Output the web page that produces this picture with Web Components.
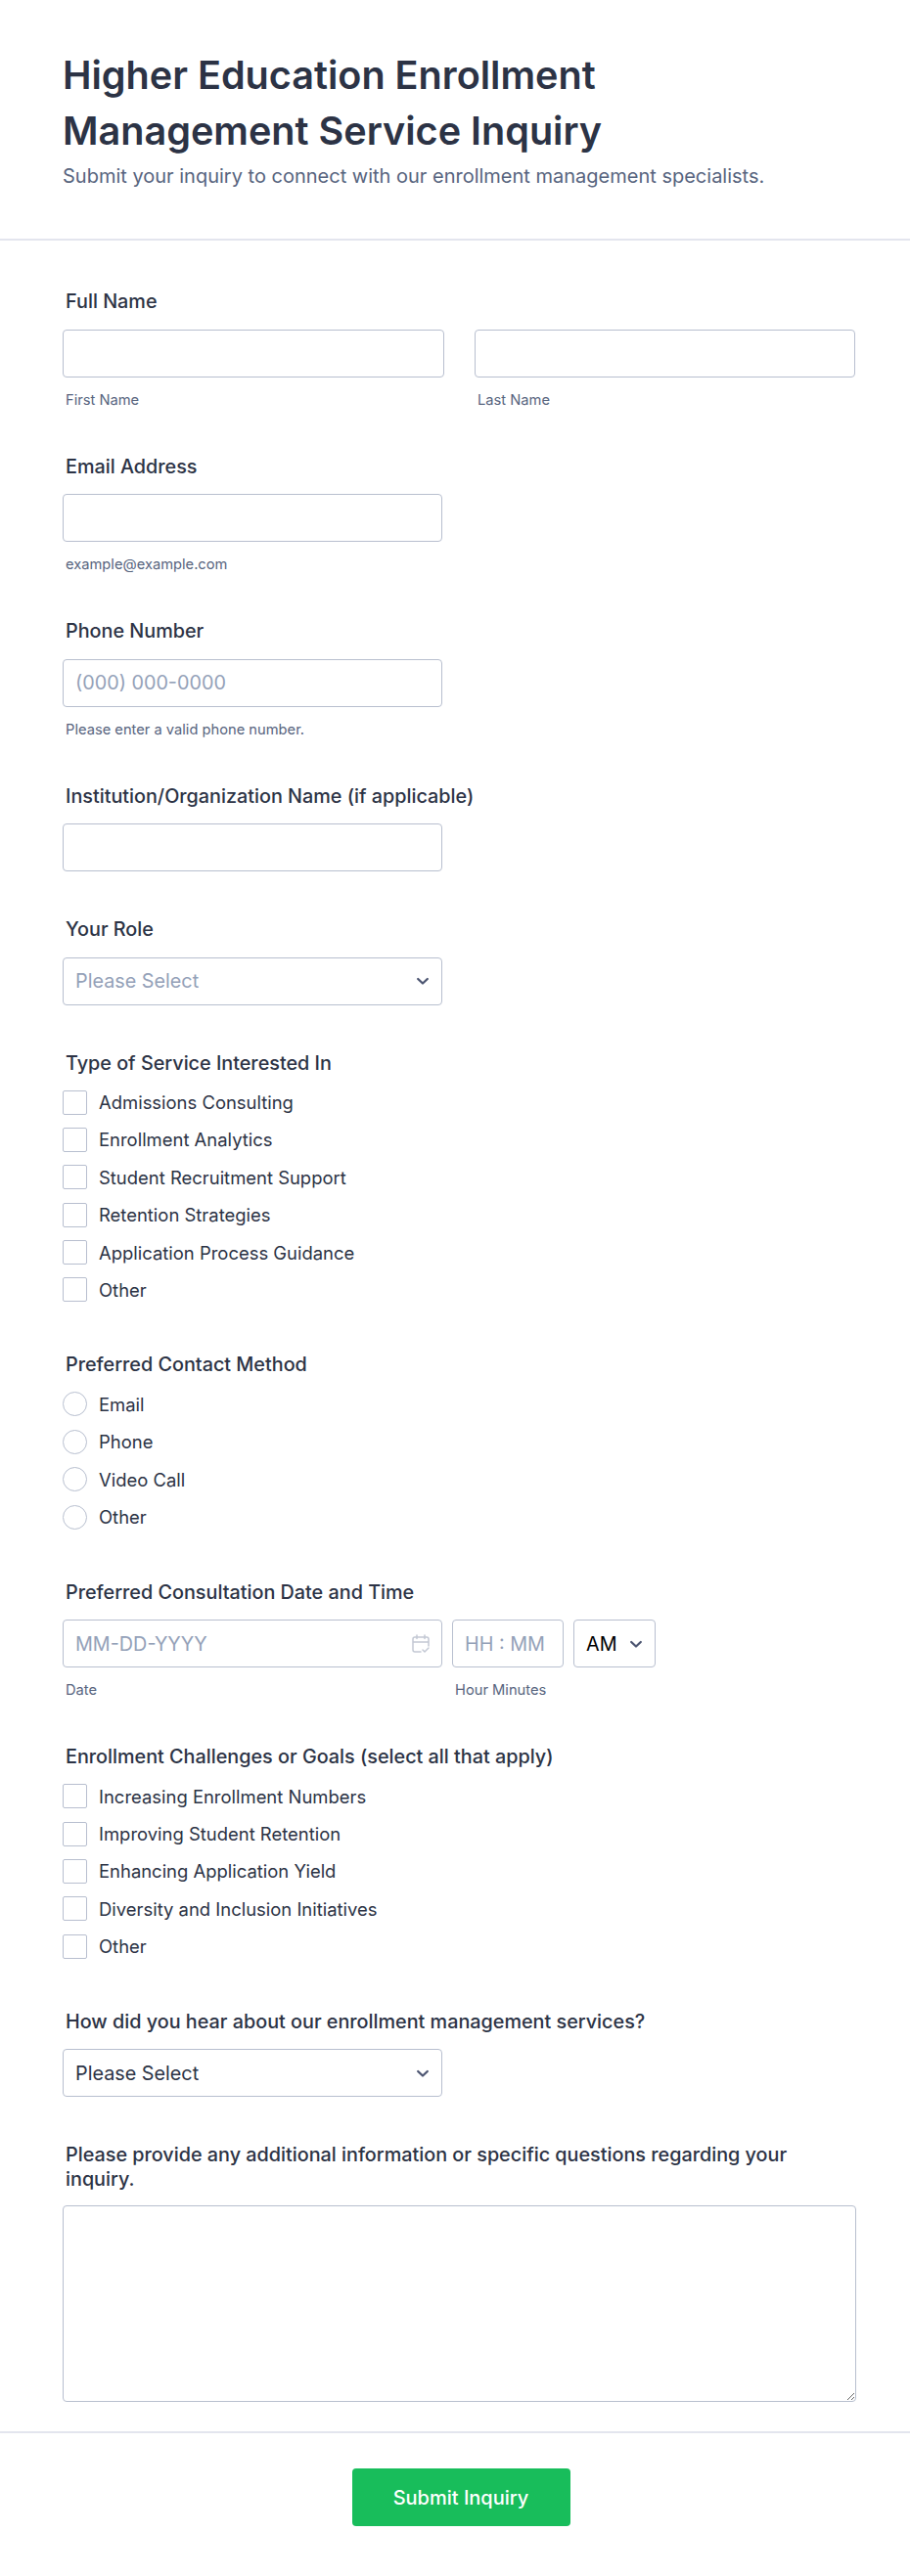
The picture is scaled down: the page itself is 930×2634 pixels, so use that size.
<!DOCTYPE html>
<html lang="en">
<head>
<meta charset="utf-8">
<title>Higher Education Enrollment Management Service Inquiry</title>
<style>
  html, body { margin: 0; background: #fff; }
  body { font-family: Inter, "Noto Sans", sans-serif; color: #2c3345; }
  form-page { display: block; }
</style>
</head>
<body>
<form-page>
  <form-header title-text="Higher Education Enrollment Management Service Inquiry">Submit your inquiry to connect with our enrollment management specialists.</form-header>

  <form-field label="Full Name">
    <div style="display:grid;grid-template-columns:390px 389px;column-gap:31px">
      <text-box sub="First Name"></text-box>
      <text-box sub="Last Name"></text-box>
    </div>
  </form-field>
  <form-field label="Email Address"><text-box sub="example@example.com" style="width:388px"></text-box></form-field>
  <form-field label="Phone Number"><text-box placeholder="(000) 000-0000" sub="Please enter a valid phone number." style="width:388px"></text-box></form-field>
  <form-field label="Institution/Organization Name (if applicable)"><text-box style="width:388px"></text-box></form-field>
  <form-field label="Your Role"><select-box placeholder="Please Select" style="width:388px"></select-box></form-field>

  <form-field label="Type of Service Interested In" list>
    <choice-list>
      <choice-item>Admissions Consulting</choice-item>
      <choice-item>Enrollment Analytics</choice-item>
      <choice-item>Student Recruitment Support</choice-item>
      <choice-item>Retention Strategies</choice-item>
      <choice-item>Application Process Guidance</choice-item>
      <choice-item>Other</choice-item>
    </choice-list>
  </form-field>

  <form-field label="Preferred Contact Method" list>
    <choice-list>
      <choice-item radio>Email</choice-item>
      <choice-item radio>Phone</choice-item>
      <choice-item radio>Video Call</choice-item>
      <choice-item radio>Other</choice-item>
    </choice-list>
  </form-field>

  <form-field label="Preferred Consultation Date and Time"><date-time></date-time></form-field>

  <form-field label="Enrollment Challenges or Goals (select all that apply)" list>
    <choice-list>
      <choice-item>Increasing Enrollment Numbers</choice-item>
      <choice-item>Improving Student Retention</choice-item>
      <choice-item>Enhancing Application Yield</choice-item>
      <choice-item>Diversity and Inclusion Initiatives</choice-item>
      <choice-item>Other</choice-item>
    </choice-list>
  </form-field>

  <form-field label="How did you hear about our enrollment management services?"><select-box value="Please Select" style="width:388px"></select-box></form-field>

  <form-field label="Please provide any additional information or specific questions regarding your inquiry." last><text-area></text-area></form-field>

  <submit-bar>Submit Inquiry</submit-bar>
</form-page>

<script>
const box = `
  border: 1px solid #b8bfcf;
  border-radius: 4px;
  background: #fff;
  box-sizing: border-box;
  height: 49px;
  font-size: 19.8px;
  display: flex;
  align-items: center;
  padding: 0 12px;
`;
const chevron = `<svg width="14" height="14" viewBox="0 0 14 14" fill="none"><path d="M2.2 5l4.8 4.5L11.8 5" stroke="#4d5672" stroke-width="2.3" stroke-linecap="round" stroke-linejoin="round"/></svg>`;

class FormPage extends HTMLElement {
  constructor() {
    super();
    this.attachShadow({ mode: "open" }).innerHTML = `
    <style>:host { display: block; width: 930px; }</style>
    <slot></slot>`;
  }
}

class FormHeader extends HTMLElement {
  constructor() {
    super();
    this.attachShadow({ mode: "open" });
  }
  connectedCallback() {
    this.shadowRoot.innerHTML = `
    <style>
      :host { display: block; height: 244px; padding: 0 64px; border-bottom: 2px solid #e3e5ee; margin-bottom: 51px; }
      h1 { margin: 0; padding-top: 49px; width: 600px; font: 600 39.6px/57px Inter, sans-serif; color: #2c3345; }
      p { margin: 5px 0 0; font: 400 20px/24px Inter, sans-serif; color: #57647e; }
    </style>
    <h1>${this.getAttribute("title-text")}</h1>
    <p><slot></slot></p>`;
  }
}

class FormField extends HTMLElement {
  constructor() {
    super();
    this.attachShadow({ mode: "open" });
  }
  connectedCallback() {
    this.shadowRoot.innerHTML = `
    <style>
      :host { display: block; padding: 0 55px 0 64px; margin-bottom: 48px; }
      :host([list]) { margin-bottom: 53.5px; }
      :host([last]) { margin-top: -1.5px; margin-bottom: 30px; }
      .label { font: 450 19.8px/22px Inter, sans-serif; color: #2c3345; padding-left: 3px; margin-bottom: 17.5px; }
      :host([last]) .label { line-height: 25px; margin-bottom: 14.5px; }
    </style>
    <div class="label">${this.getAttribute("label")}</div>
    <slot></slot>`;
  }
}

class TextBox extends HTMLElement {
  constructor() {
    super();
    this.attachShadow({ mode: "open" });
  }
  connectedCallback() {
    const sub = this.getAttribute("sub");
    const ph = this.getAttribute("placeholder");
    this.shadowRoot.innerHTML = `
    <style>
      :host { display: block; }
      .box { ${box} color: #94a1b8; }
      .sub { font: 400 14.7px/18px Inter, sans-serif; color: #57647e; padding: 14px 0 0 3px; }
    </style>
    <div class="box">${ph || ""}</div>
    ${sub ? `<div class="sub">${sub}</div>` : ""}`;
  }
}

class SelectBox extends HTMLElement {
  constructor() {
    super();
    this.attachShadow({ mode: "open" });
  }
  connectedCallback() {
    const value = this.getAttribute("value");
    this.shadowRoot.innerHTML = `
    <style>
      :host { display: block; }
      .box { ${box} justify-content: space-between; color: ${value ? "#2c3345" : "#94a1b8"}; }
    </style>
    <div class="box"><span>${value || this.getAttribute("placeholder")}</span>${chevron}</div>`;
  }
}

class ChoiceList extends HTMLElement {
  constructor() {
    super();
    this.attachShadow({ mode: "open" }).innerHTML = `
    <style>:host { display: flex; flex-direction: column; gap: 14.4px; }</style>
    <slot></slot>`;
  }
}

class ChoiceItem extends HTMLElement {
  constructor() {
    super();
    this.attachShadow({ mode: "open" }).innerHTML = `
    <style>
      :host { display: flex; align-items: center; gap: 12px; height: 24px; font: 400 18.45px/24px Inter, sans-serif; color: #2c3345; }
      .mark { width: 25px; height: 25px; box-sizing: border-box; border: 1px solid #b8bfcf; border-radius: 2px; background: #fff; flex: none; }
      :host([radio]) .mark { border-radius: 50%; }
    </style>
    <span class="mark"></span><span><slot></slot></span>`;
  }
}

class DateTime extends HTMLElement {
  constructor() {
    super();
    this.attachShadow({ mode: "open" }).innerHTML = `
    <style>
      :host { display: grid; grid-template-columns: 388px 114px 84px; column-gap: 10px; }
      .box { ${box} color: #94a1b8; }
      .date { justify-content: space-between; }
      .ampm { color: #000; justify-content: space-between; }
      .sub { font: 400 14.7px/18px Inter, sans-serif; color: #57647e; padding: 14px 0 0 3px; }
    </style>
    <div class="box date"><span>MM-DD-YYYY</span>
      <svg width="18" height="20" viewBox="0 0 18 20" fill="none" stroke="#c3c8d4" stroke-width="1.5" stroke-linecap="round" stroke-linejoin="round"><path d="M9 18H3a2 2 0 0 1-2-2V5a2 2 0 0 1 2-2h12a2 2 0 0 1 2 2v7M5 1v3.5M13 1v3.5M1 8h16M11 16l2 2 4-4"/></svg>
    </div>
    <div class="box">HH : MM</div>
    <div class="box ampm"><span>AM</span>${chevron}</div>
    <div class="sub">Date</div>
    <div class="sub">Hour Minutes</div>`;
  }
}

class TextArea extends HTMLElement {
  constructor() {
    super();
    this.attachShadow({ mode: "open" }).innerHTML = `
    <style>
      :host { display: block; }
      textarea { display: block; width: 100%; height: 201px; box-sizing: border-box; border: 1px solid #b8bfcf; border-radius: 4px; resize: vertical; outline: none; }
    </style>
    <textarea></textarea>`;
  }
}

class SubmitBar extends HTMLElement {
  constructor() {
    super();
    this.attachShadow({ mode: "open" }).innerHTML = `
    <style>
      :host { display: flex; justify-content: center; border-top: 2px solid #e3e5ee; padding: 36px 0 0 12px; height: 147px; box-sizing: border-box; }
      button { width: 223px; height: 59px; border: 0; border-radius: 4px; background: #18bd5b; color: #fff; font: 500 20px Inter, sans-serif; }
    </style>
    <button><slot></slot></button>`;
  }
}

customElements.define("form-page", FormPage);
customElements.define("form-header", FormHeader);
customElements.define("form-field", FormField);
customElements.define("text-box", TextBox);
customElements.define("select-box", SelectBox);
customElements.define("choice-list", ChoiceList);
customElements.define("choice-item", ChoiceItem);
customElements.define("date-time", DateTime);
customElements.define("text-area", TextArea);
customElements.define("submit-bar", SubmitBar);
</script>
</body>
</html>
